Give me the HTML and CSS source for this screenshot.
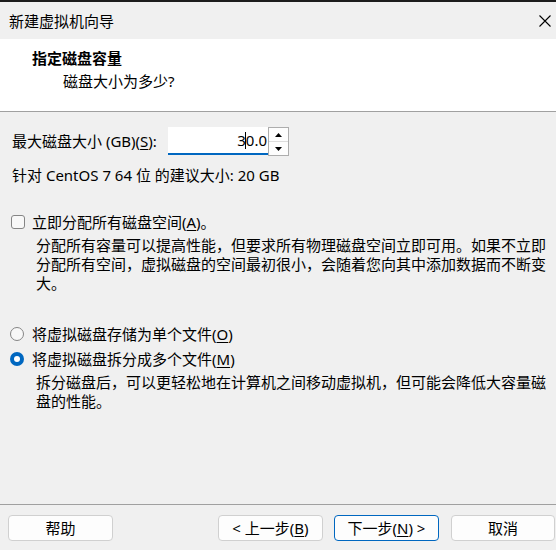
FILE: index.html
```html
<!DOCTYPE html>
<html lang="zh-CN">
<head>
<meta charset="utf-8">
<title>新建虚拟机向导</title>
<link rel="stylesheet" href="styles.css">
</head>
<body>
<div class="window">
  <div class="titlebar">
    <span class="title">新建虚拟机向导</span>
    <svg class="close" width="12" height="12" viewBox="0 0 12 12"><path d="M0.5 0.5 L11.5 11.5 M11.5 0.5 L0.5 11.5" stroke="#000" stroke-width="1.1" fill="none"/></svg>
  </div>
  <div class="header">
    <div class="h-title">指定磁盘容量</div>
    <div class="h-sub">磁盘大小为多少?</div>
  </div>
  <div class="content">
    <div class="size-row">
      <label class="size-label">最大磁盘大小 (GB)(<u>S</u>):</label>
      <div class="spin-input"><span class="val">3<span class="caret"></span>0.0</span></div>
      <div class="spinner">
        <div class="spin-btn"><svg width="7" height="4" viewBox="0 0 7 4"><path d="M0 4 L3.5 0 L7 4 Z" fill="#000"/></svg></div>
        <div class="spin-btn"><svg width="7" height="4" viewBox="0 0 7 4"><path d="M0 0 L3.5 4 L7 0 Z" fill="#000"/></svg></div>
      </div>
    </div>
    <div class="recommend">针对 CentOS 7 64 位 的建议大小: 20 GB</div>

    <div class="opt check-row">
      <span class="checkbox"></span>
      <span>立即分配所有磁盘空间(<u>A</u>)。</span>
    </div>
    <p class="desc desc1">分配所有容量可以提高性能，但要求所有物理磁盘空间立即可用。如果不立即分配所有空间，虚拟磁盘的空间最初很小，会随着您向其中添加数据而不断变大。</p>

    <div class="opt radio-row r1">
      <span class="radio"></span>
      <span>将虚拟磁盘存储为单个文件(<u>O</u>)</span>
    </div>
    <div class="opt radio-row r2">
      <span class="radio checked"></span>
      <span>将虚拟磁盘拆分成多个文件(<u>M</u>)</span>
    </div>
    <p class="desc desc2">拆分磁盘后，可以更轻松地在计算机之间移动虚拟机，但可能会降低大容量磁盘的性能。</p>
  </div>
  <div class="footer">
    <button class="btn">帮助</button>
    <button class="btn btn-back">&lt; 上一步(<u>B</u>)</button>
    <button class="btn btn-next">下一步(<u>N</u>) &gt;</button>
    <button class="btn btn-cancel">取消</button>
  </div>
</div>
</body>
</html>
```

FILE: styles.css
```css
* { box-sizing: border-box; }
html, body {
  margin: 0;
  padding: 0;
  width: 556px;
  height: 550px;
  overflow: hidden;
  background: #f0f0f0;
}
body {
  font-family: "Noto Sans", "Noto Sans CJK SC", sans-serif;
  font-size: 15px;
  color: #000;
}
u { text-decoration: underline; text-underline-offset: 2px; text-decoration-thickness: 1px; }
.window {
  height: 550px;
  display: flex;
  flex-direction: column;
  border-top: 2px solid #1c1c1c;
}
.titlebar {
  height: 37px;
  flex: none;
  display: flex;
  align-items: center;
  padding-left: 9px;
  padding-right: 5px;
  background: #f0f0f0;
}
.title { line-height: 20px; flex: 1; }
.header {
  flex: none;
  height: 73px;
  background: #fff;
  border-bottom: 1px solid #a0a0a0;
  padding-top: 9px;
  line-height: 20px;
}
.h-title { font-weight: 700; padding-left: 32px; }
.h-sub { padding-left: 63px; margin-top: 3px; }
.content {
  flex: 1;
  padding: 0 0 0 12px;
  line-height: 20px;
}
.size-row {
  display: flex;
  align-items: center;
  margin-top: 15px;
  height: 28px;
}
.size-label { width: 156px; flex: none; }
.spin-input {
  width: 100px;
  height: 28px;
  background: #fff;
  border-bottom: 2px solid #0067c0;
  display: flex;
  align-items: center;
  justify-content: flex-end;
  padding-right: 1px;
}
.caret {
  display: inline-block;
  width: 1px;
  height: 17px;
  background: #000;
  vertical-align: -3px;
  margin: 0 -0.5px;
}
.spinner {
  width: 21px;
  height: 29px;
  border: 1px solid #adadad;
  background: #fdfdfd;
  display: flex;
  flex-direction: column;
  margin-top: 1px;
}
.spin-btn {
  flex: 1;
  display: flex;
  align-items: center;
  justify-content: center;
}
.spin-btn + .spin-btn { border-top: 1px solid #dcdcdc; }
.recommend { margin-top: 10px; }
.opt {
  display: flex;
  align-items: center;
  height: 20px;
}
.check-row { margin-top: 27px; }
.checkbox {
  width: 14px;
  height: 14px;
  border: 1px solid #858585;
  border-radius: 3px;
  background: #f8f8f8;
  margin-left: -1px;
  margin-right: 7px;
  flex: none;
}
.desc {
  margin: 0 0 0 24px;
  width: 516px;
  line-height: 19px;
}
.desc1 { margin-top: 4px; }
.radio-row.r1 { margin-top: 31px; }
.radio-row.r2 { margin-top: 5px; }
.radio {
  width: 14px;
  height: 14px;
  border-radius: 50%;
  border: 1px solid #858585;
  background: #f8f8f8;
  margin-left: -2px;
  margin-right: 8px;
  flex: none;
}
.radio.checked {
  border: none;
  background: #0067c0;
  position: relative;
}
.radio.checked::after {
  content: "";
  position: absolute;
  left: 4px;
  top: 4px;
  width: 6px;
  height: 6px;
  border-radius: 50%;
  background: #fff;
}
.desc2 { margin-top: 4px; }
.footer {
  flex: none;
  height: 46px;
  border-top: 1px solid #a0a0a0;
  display: flex;
  align-items: flex-start;
  padding-top: 10px;
  padding-left: 8px;
}
.btn {
  font-family: "Noto Sans", "Noto Sans CJK SC", sans-serif;
  font-size: 15px;
  color: #000;
  width: 105px;
  height: 26px;
  padding: 0;
  line-height: 20px;
  background: #fdfdfd;
  border: 1px solid #d0d0d0;
  border-radius: 4px;
  flex: none;
}
.btn-back { margin-left: 105px; }
.btn-next { margin-left: 11px; border-color: #0067c0; }
.btn-cancel { margin-left: 12px; width: 104px; }
```
